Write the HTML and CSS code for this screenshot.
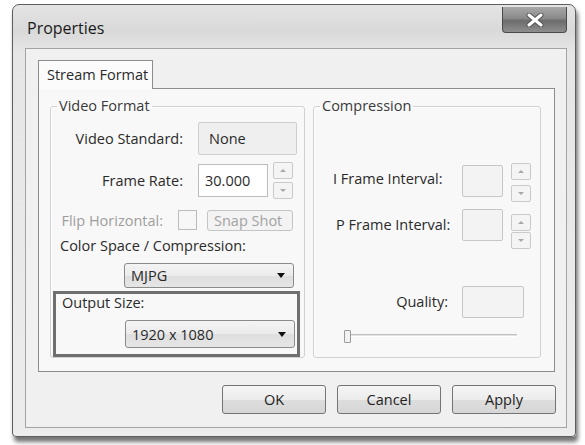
FILE: index.html
```html
<!DOCTYPE html>
<html>
<head>
<meta charset="utf-8">
<link rel="stylesheet" href="styles.css">
</head>
<body>
<div class="window">
  <div class="titlebar">
    <span class="title">Properties</span>
    <div class="close">
      <svg width="18" height="14" viewBox="0 0 18 14">
        <path d="M3 2 L15 12 M15 2 L3 12" stroke="#555" stroke-width="5" stroke-linecap="round"/>
        <path d="M3 2 L15 12 M15 2 L3 12" stroke="#fff" stroke-width="3" stroke-linecap="round"/>
      </svg>
    </div>
  </div>
  <div class="client">
    <div class="tabs"><div class="tab">Stream Format</div></div>
    <div class="panel">
      <fieldset class="group video">
        <legend>Video Format</legend>
        <div class="row r1">
          <span class="label">Video Standard:</span>
          <div class="field ro">None</div>
        </div>
        <div class="row r2">
          <span class="label">Frame Rate:</span>
          <div class="field edit">30.000</div>
          <div class="spin"><span class="sb up"></span><span class="sb down"></span></div>
        </div>
        <div class="row r3">
          <span class="label dis">Flip Horizontal:</span>
          <span class="check"></span>
          <span class="snap">Snap Shot</span>
        </div>
        <div class="text cs">Color Space / Compression:</div>
        <div class="combo c1"><span>MJPG</span><span class="arrow"></span></div>
        <div class="outbox">
          <div class="text">Output Size:</div>
          <div class="combo c2"><span>1920 x 1080</span><span class="arrow"></span></div>
        </div>
      </fieldset>
      <fieldset class="group comp">
        <legend>Compression</legend>
        <div class="crow ci">
          <span class="clabel">I Frame Interval:</span>
          <div class="box"></div>
          <div class="spin tall"><span class="sb up"></span><span class="sb down"></span></div>
        </div>
        <div class="crow cp">
          <span class="clabel">P Frame Interval:</span>
          <div class="box"></div>
          <div class="spin tall"><span class="sb up"></span><span class="sb down"></span></div>
        </div>
        <div class="crow cq">
          <span class="qlabel">Quality:</span>
          <div class="box wide"></div>
        </div>
        <div class="slider"><span class="track"></span><span class="thumb"></span></div>
      </fieldset>
    </div>
    <div class="buttons">
      <button class="btn">OK</button>
      <button class="btn">Cancel</button>
      <button class="btn">Apply</button>
    </div>
  </div>
</div>
</body>
</html>
```
FILE: styles.css
```css
* { box-sizing: border-box; }
html, body { margin: 0; padding: 0; }
body {
  background: #ffffff;
  width: 585px;
  height: 445px;
  overflow: hidden;
  font-family: "Open Sans", "Noto Sans", sans-serif;
  font-size: 14.5px;
  color: #2a2a2a;
}
.window {
  margin: 4px 0 0 12px;
  width: 564px;
  height: 433px;
  border: 1px solid #5e5e5e;
  border-radius: 7px 7px 4px 4px;
  background: linear-gradient(180deg, #e4e4e4 0%, #d9d9d9 6%, #e6e6e6 11%, #ececec 100%);
  padding: 0 8px 8px 12px;
  display: flex;
  flex-direction: column;
  box-shadow: 2px 5px 4px rgba(0,0,0,0.55);
}
.titlebar {
  height: 43px;
  display: flex;
  justify-content: space-between;
  align-items: flex-start;
}
.title {
  font-size: 16px;
  line-height: 20px;
  margin-top: 13px;
  padding-left: 2px;
  color: #1a1a1a;
}
.close {
  margin-top: 2px;
  width: 65px;
  height: 26px;
  border: 1px solid #4a4a4a;
  border-top: none;
  border-radius: 0 0 4px 4px;
  background: linear-gradient(180deg, #a8a8a8 0%, #8a8a8a 45%, #6c6c6c 55%, #8e8e8e 100%);
  display: flex;
  align-items: center;
  justify-content: center;
}
.client {
  flex: 1;
  border: 1px solid #a3a3a3;
  background: #f0f0f0;
  padding: 11px 10px 0 12px;
  display: flex;
  flex-direction: column;
}
.tabs { display: flex; }
.tab {
  width: 115px;
  height: 29px;
  border: 1px solid #8c8c8c;
  border-bottom: none;
  background: #fbfbfb;
  padding-left: 8px;
  line-height: 27px;
  margin-bottom: -1px;
  position: relative;
  z-index: 1;
}
.panel {
  width: 517px;
  height: 284px;
  border: 1px solid #8c8c8c;
  background: #f8f8f8;
  padding: 8px 0 0 11px;
  display: flex;
  gap: 8px;
  align-items: flex-start;
}
.group {
  margin: 0;
  border: 1px solid #d2d2d2;
  border-radius: 3px;
  padding: 0 6px;
  min-width: 0;
  height: 261px;
  box-shadow: inset 1px 1px 0 #ffffff;
  display: flex;
  flex-direction: column;
}
.group legend {
  padding: 0 2px;
  line-height: 18px;
  color: #3a3a3a;
}
.video { width: 255px; }
.comp { width: 228px; }

.row { display: flex; align-items: center; }
.label { width: 126px; text-align: right; flex: none; white-space: nowrap; }
.r1 { margin-top: 7px; height: 33px; }
.r2 { margin-top: 8px; height: 34px; }
.r3 { margin-top: 13px; height: 20px; }
.field {
  height: 33px;
  margin-left: 15px;
  line-height: 31px;
  padding-left: 10px;
}
.ro { width: 99px; background: #efefef; border: 1px solid #cfcfcf; border-radius: 2px; }
.edit { width: 70px; background: #ffffff; border: 1px solid #bdbdbd; padding-left: 6px; }
.spin {
  margin-left: 5px;
  width: 20px;
  height: 37px;
  display: flex;
  flex-direction: column;
  justify-content: space-between;
}
.sb {
  height: 17px;
  border: 1px solid #cacaca;
  border-radius: 2px;
  background: #f4f4f4;
  display: flex;
  align-items: center;
  justify-content: center;
}
.sb::after {
  content: "";
  width: 0; height: 0;
  border-left: 3px solid transparent;
  border-right: 3px solid transparent;
}
.up::after { border-bottom: 3px solid #a8a8a8; }
.down::after { border-top: 3px solid #a8a8a8; }

.dis { color: #9e9e9e; width: 106px; }
.check {
  margin-left: 15px;
  width: 19px;
  height: 20px;
  border: 1px solid #bcbcbc;
  background: #f7f7f7;
  flex: none;
}
.snap {
  margin-left: 10px;
  width: 86px;
  height: 21px;
  border: 1px solid #c4c4c4;
  border-radius: 3px;
  background: #f3f3f3;
  color: #a2a2a2;
  line-height: 19px;
  padding-left: 6px;
  font-size: 14.5px;
  white-space: nowrap;
  flex: none;
}
.text { line-height: 18px; }
.cs { margin-top: 7px; margin-left: 3px; }
.combo {
  width: 170px;
  height: 28px;
  border: 1px solid #8a8a8a;
  border-radius: 3px;
  background: linear-gradient(180deg, #f4f4f4 0%, #ebebeb 50%, #dedede 51%, #e6e6e6 100%);
  display: flex;
  align-items: center;
  justify-content: space-between;
  padding: 0 8px 0 6px;
}
.arrow {
  width: 0; height: 0;
  border-left: 4px solid transparent;
  border-right: 4px solid transparent;
  border-top: 5px solid #111;
}
.c1 { margin-top: 8px; margin-left: 67px; }
.outbox {
  margin-top: 3px;
  margin-left: -4px;
  width: 247px;
  height: 66px;
  border: 3px solid #6f6f6f;
  padding: 0 0 0 6px;
  flex: none;
}
.c2 { margin-top: 8px; margin-left: 63px; }

.crow { display: flex; align-items: flex-start; }
.clabel { margin-left: 13px; width: 129px; white-space: nowrap; line-height: 18px; flex: none; }
.box {
  width: 41px;
  height: 32px;
  border: 1px solid #c6c6c6;
  border-radius: 2px;
  background: #f3f3f3;
  flex: none;
}
.wide { width: 62px; }
.tall { margin-left: 8px; height: 39px; }
.ci { margin-top: 48px; height: 39px; }
.ci .clabel { margin-top: 7px; }
.ci .box { margin-top: 2px; }
.cp { margin-top: 7px; height: 39px; }
.cp .clabel { margin-top: 7px; margin-left: 16px; width: 126px; }
.cp .tall { margin-top: 5px; height: 35px; }
.cq { margin-top: 38px; height: 32px; }
.qlabel { width: 128px; text-align: right; line-height: 18px; margin-top: 7px; flex: none; }
.cq .box { margin-left: 14px; }
.slider {
  margin-top: 12px;
  margin-left: 24px;
  width: 173px;
  height: 13px;
  position: relative;
  flex: none;
}
.track {
  display: block;
  margin-top: 4px;
  height: 3px;
  border-top: 1px solid #c0c0c0;
  border-bottom: 1px solid #ffffff;
  background: #e2e2e2;
}
.thumb {
  position: absolute;
  left: 0;
  top: 0;
  width: 7px;
  height: 13px;
  border: 1px solid #9a9a9a;
  border-radius: 1px;
  background: #f2f2f2;
}

.buttons {
  margin-top: 13px;
  display: flex;
  justify-content: flex-end;
  gap: 11px;
}
.btn {
  width: 104px;
  height: 29px;
  border: 1px solid #747474;
  border-radius: 3px;
  background: linear-gradient(180deg, #f5f5f5 0%, #ececec 50%, #dddddd 51%, #d6d6d6 100%);
  font-family: "Open Sans", "Noto Sans", sans-serif;
  font-size: 14.5px;
  color: #222;
  padding: 0;
}
```
